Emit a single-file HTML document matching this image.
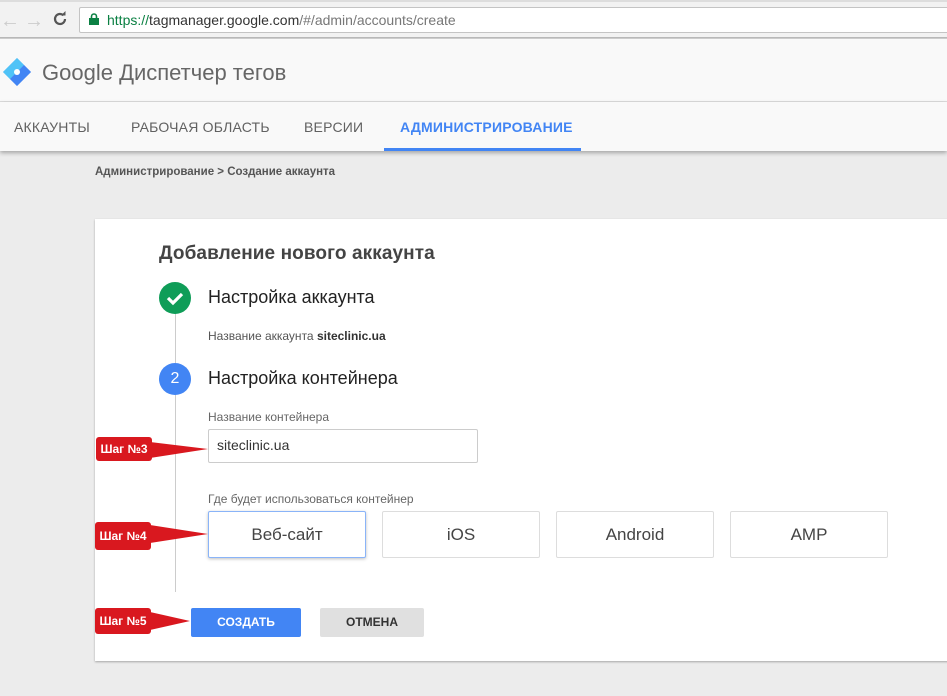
<!DOCTYPE html>
<html><head><meta charset="utf-8"><style>
*{box-sizing:border-box;margin:0;padding:0}
body{width:947px;height:696px;overflow:hidden;background:#ececec;font-family:"Liberation Sans",Arial,sans-serif;position:relative;color:#333}
.abs{position:absolute}
.chrome{left:0;top:0;width:947px;height:38px;background:#f2f2f2;border-bottom:1px solid #b8b8b8}
.addr{left:79px;top:7px;width:880px;height:26px;background:#fff;border:1px solid #c4c4c4;border-radius:2px}
.url{left:107px;top:12px;font-size:14px;color:#333}
.hdr{left:0;top:38px;width:947px;height:64px;background:#f9f9f9;border-top:1px solid #ccc;border-bottom:1px solid #ddd}
.nav{left:0;top:102px;width:947px;height:49px;background:#f9f9f9;box-shadow:0 2px 4px rgba(0,0,0,.3)}
.tab{top:119px;font-size:14px;color:#616161;letter-spacing:.2px}
.card{left:95px;top:219px;width:860px;height:442px;background:#fff;box-shadow:0 1px 2px rgba(0,0,0,.3)}
.opt{top:511px;width:158px;height:47px;border:1px solid #ddd;border-radius:2px;font-size:17px;color:#444;text-align:center;line-height:45px;background:#fff}
.tag{width:56px;height:24px;background:#d9181f;border-radius:3px;color:#fff;font-size:12px;font-weight:bold;text-align:center;line-height:24px}
</style></head><body>
<div class="abs chrome"></div>
<div class="abs" style="left:0;top:0;width:947px;height:2px;background:#ddd"></div>
<div class="abs" style="left:0;top:10px;font-size:20px;color:#ccc">←</div>
<div class="abs" style="left:24px;top:10px;font-size:20px;color:#ccc">→</div>
<svg class="abs" style="left:52px;top:11px" width="16" height="16" viewBox="0 0 16 16"><path d="M13 8a5 5 0 1 1-1.5-3.6" fill="none" stroke="#555" stroke-width="2.2"/><path d="M9 4.5h4.5V0z" fill="#555"/></svg>
<div class="abs addr"></div>
<svg class="abs" style="left:89px;top:13px" width="10" height="12" viewBox="0 0 10 12"><rect x="0" y="5" width="10" height="7" fill="#0b8043"/><path d="M2.5 5V3.5a2.5 2.5 0 0 1 5 0V5" fill="none" stroke="#0b8043" stroke-width="1.6"/></svg>
<div class="abs url"><span style="color:#0b8043">https://</span>tagmanager.google.com<span style="color:#777">/#/admin/accounts/create</span></div>
<div class="abs hdr"></div>
<svg class="abs" style="left:2px;top:57px" width="30" height="30" viewBox="0 0 30 30"><path d="M15 1L29 15 15 29 1 15z" fill="#8ab4f8"/><path d="M15 1L22 8 8 22 1 15z" fill="#4fc3f7"/><path d="M22 8L29 15 15 29 8 22z" fill="#4285f4"/><circle cx="15" cy="15" r="3" fill="#fff"/></svg>
<div class="abs" style="left:42px;top:60px;font-size:22px;color:#666">Google <span style="color:#666">Диспетчер тегов</span></div>
<div class="abs nav"></div>
<div class="abs tab" style="left:14px">АККАУНТЫ</div>
<div class="abs tab" style="left:131px">РАБОЧАЯ ОБЛАСТЬ</div>
<div class="abs tab" style="left:304px">ВЕРСИИ</div>
<div class="abs tab" style="left:400px;color:#4285f4;font-weight:bold">АДМИНИСТРИРОВАНИЕ</div>
<div class="abs" style="left:384px;top:148px;width:197px;height:3px;background:#4285f4"></div>
<div class="abs" style="left:95px;top:166px;font-size:11.5px;color:#555;font-weight:bold">Администрирование &gt; Создание аккаунта</div>
<div class="abs card"></div>
<div class="abs" style="left:159px;top:243px;font-size:19px;color:#444;font-weight:bold;letter-spacing:.1px">Добавление нового аккаунта</div>
<div class="abs" style="left:175px;top:312px;width:1px;height:280px;background:#ccc"></div>
<div class="abs" style="left:159px;top:282px;width:32px;height:32px;border-radius:50%;background:#0f9d58"></div>
<svg class="abs" style="left:165px;top:288px" width="20" height="20" viewBox="0 0 20 20"><path d="M3 10l5 5 9-9" fill="none" stroke="#fff" stroke-width="3.2"/></svg>
<div class="abs" style="left:208px;top:287px;font-size:18px;color:#222">Настройка аккаунта</div>
<div class="abs" style="left:208px;top:329px;font-size:12px;color:#555">Название аккаунта <b style="color:#333">siteclinic.ua</b></div>
<div class="abs" style="left:159px;top:363px;width:32px;height:32px;border-radius:50%;background:#4285f4;color:#fff;font-size:16px;text-align:center;line-height:32px">2</div>
<div class="abs" style="left:208px;top:368px;font-size:18px;color:#222">Настройка контейнера</div>
<div class="abs" style="left:208px;top:410px;font-size:12px;color:#666">Название контейнера</div>
<div class="abs" style="left:208px;top:429px;width:270px;height:34px;border:1px solid #ccc;border-radius:2px"></div>
<div class="abs" style="left:217px;top:437px;font-size:14px;color:#333">siteclinic.ua</div>
<div class="abs" style="left:208px;top:492px;font-size:12px;color:#666">Где будет использоваться контейнер</div>
<div class="abs opt" style="left:208px;border-color:#8ab4f8;box-shadow:0 1px 3px rgba(0,0,0,.25)">Веб-сайт</div>
<div class="abs opt" style="left:382px">iOS</div>
<div class="abs opt" style="left:556px">Android</div>
<div class="abs opt" style="left:730px">AMP</div>
<div class="abs" style="left:191px;top:608px;width:110px;height:29px;background:#4285f4;border-radius:2px;color:#fff;font-weight:bold;font-size:12px;text-align:center;line-height:29px">СОЗДАТЬ</div>
<div class="abs" style="left:320px;top:608px;width:104px;height:29px;background:#e0e0e0;border-radius:2px;color:#333;font-weight:bold;font-size:12px;text-align:center;line-height:29px">ОТМЕНА</div>
<svg class="abs" style="left:140px;top:430px" width="70" height="40"><path d="M10 12L68 19 10 28z" fill="#d9181f"/></svg>
<div class="abs tag" style="left:96px;top:437px">Шаг №3</div>
<svg class="abs" style="left:140px;top:515px" width="70" height="40"><path d="M10 10L68 19 10 28z" fill="#d9181f"/></svg>
<div class="abs tag" style="left:95px;top:522px;height:28px;line-height:28px">Шаг №4</div>
<svg class="abs" style="left:140px;top:600px" width="60" height="40"><path d="M10 12L50 21 10 30z" fill="#d9181f"/></svg>
<div class="abs tag" style="left:95px;top:608px;height:26px;line-height:26px">Шаг №5</div>
</body></html>
